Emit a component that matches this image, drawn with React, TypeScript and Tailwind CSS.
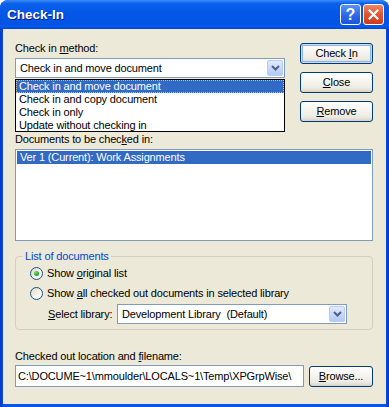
import React from "react";

function U({ children }: { children: React.ReactNode }) {
  return <span className="underline underline-offset-[1px] decoration-1">{children}</span>;
}

function Chevron() {
  return (
    <svg width="9" height="6" viewBox="0 0 9 6">
      <path d="M1 1 L4.5 4.5 L8 1" fill="none" stroke="#4D6185" strokeWidth="2" />
    </svg>
  );
}

function Combo({ text, width }: { text: string; width: string }) {
  return (
    <div className={`${width} h-[20px] border border-[#7F9DB9] bg-white flex items-center`}>
      <span className="pl-[4px] flex-1 whitespace-pre overflow-hidden">{text}</span>
      <div className="w-[16px] h-[16px] mr-[1px] rounded-[2px] border border-[#B9CCF7] bg-[linear-gradient(180deg,#E1EAFE_0%,#C9D9FC_50%,#B4C8F6_100%)] flex items-center justify-center">
        <Chevron />
      </div>
    </div>
  );
}

function XPButton({ children, isDefault, width }: { children: React.ReactNode; isDefault?: boolean; width: string }) {
  return (
    <div
      className={`${width} h-[21px] rounded-[3px] border border-[#003C74] bg-[linear-gradient(180deg,#FFFFFF_0%,#F6F5F0_40%,#ECEAE2_80%,#D8D2C6_100%)] flex items-center justify-center ${
        isDefault ? "shadow-[inset_0_0_0_1px_#C7DAF8,inset_0_0_0_2px_#8DB2EC]" : ""
      }`}
    >
      <span className="whitespace-pre">{children}</span>
    </div>
  );
}

function Radio({ checked }: { checked?: boolean }) {
  return (
    <div className="w-[13px] h-[13px] rounded-full border border-[#1C5180] bg-[linear-gradient(135deg,#DCD8CB_0%,#F6F5F1_60%,#FFFFFF_100%)] flex items-center justify-center shrink-0">
      {checked && (
        <div className="w-[5px] h-[5px] rounded-full bg-[radial-gradient(circle_at_35%_35%,#6BE368_0%,#2DAA2A_60%,#1A8A18_100%)]" />
      )}
    </div>
  );
}

export default function App() {
  return (
    <div className="w-[389px] h-[407px] bg-white font-['Liberation_Sans',Arial,sans-serif]">
      <div className="w-[389px] h-[407px] flex flex-col rounded-t-[8px] overflow-hidden bg-[linear-gradient(90deg,#0733C9_0%,#0A55E4_1%,#0A55E4_99%,#0733C9_100%)]">
        {/* Title bar */}
        <div className="h-[29px] shrink-0 flex items-center pl-[7px] pr-[5px] bg-[linear-gradient(180deg,#3D8DF9_0%,#0A62EC_12%,#0356E6_45%,#0254E4_80%,#0459EC_92%,#0443CC_100%)]">
          <span className="text-white font-bold text-[13.5px] leading-[15px] [text-shadow:1px_1px_0_#0A1883]">
            Check-In
          </span>
          <div className="ml-auto flex gap-[2px]">
            <div className="w-[21px] h-[21px] rounded-[3px] border border-white bg-[linear-gradient(180deg,#5A94F8_0%,#2B67E6_55%,#1E55D6_100%)] flex items-center justify-center">
              <span className="text-white font-bold text-[16px] leading-[16px]">?</span>
            </div>
            <div className="w-[21px] h-[21px] rounded-[3px] border border-white bg-[linear-gradient(180deg,#EE8762_0%,#E0552F_50%,#CC3C1A_100%)] flex items-center justify-center">
              <svg width="11" height="11" viewBox="0 0 11 11">
                <path d="M1.5 1.5 L9.5 9.5 M9.5 1.5 L1.5 9.5" stroke="white" strokeWidth="2.2" strokeLinecap="square" />
              </svg>
            </div>
          </div>
        </div>

        {/* Body */}
        <div className="flex-1 mx-[3px] mb-[3px] bg-[#ECE9D8] relative pl-[12px] pr-[13px] pt-[13px] flex flex-col text-[11px] leading-[13px] tracking-[-0.15px] text-black">
          <div className="flex">
            <div className="w-[270px] flex flex-col">
              <div>
                Check in <U>m</U>ethod:
              </div>
              <div className="mt-[3px]">
                <Combo text="Check in and move document" width="w-[270px]" />
              </div>
            </div>
            <div className="ml-auto flex flex-col gap-[8px] pt-[1px]">
              <XPButton isDefault width="w-[73px]">
                Check <U>I</U>n
              </XPButton>
              <XPButton width="w-[73px]">
                <U>C</U>lose
              </XPButton>
              <XPButton width="w-[73px]">
                <U>R</U>emove
              </XPButton>
            </div>
          </div>

          <div className="mt-[11px]">
            Documents to be chec<U>k</U>ed in:
          </div>
          <div className="mt-[3px] h-[92px] border border-[#7F9DB9] bg-white p-[1px]">
            <div className="h-[13px] bg-[#316AC5] text-white pl-[3px] whitespace-nowrap">
              Ver 1 (Current): Work Assignments
            </div>
          </div>

          <fieldset className="mt-[9px] border border-[#D0D0BF] rounded-[4px] pl-[14px] pr-[25px] pt-[4px] pb-[5px]">
            <legend className="ml-[-7px] px-[2px] text-[#0046D5] leading-[13px]">List of documents</legend>
            <div className="flex items-center gap-[4px] h-[13px]">
              <Radio checked />
              <span>
                Show <U>o</U>riginal list
              </span>
            </div>
            <div className="flex items-center gap-[4px] h-[13px] mt-[7px]">
              <Radio />
              <span>
                Show <U>a</U>ll checked out documents in selected library
              </span>
            </div>
            <div className="flex items-center mt-[4px] pl-[18px]">
              <span className="w-[69px]">
                <U>S</U>elect library:
              </span>
              <Combo text="Development Library  (Default)" width="w-[230px]" />
            </div>
          </fieldset>

          <div className="mt-[20px]">
            Checked out location and <U>f</U>ilename:
          </div>
          <div className="flex items-start mt-[2px]">
            <div className="w-[289px] h-[22px] border border-[#7F9DB9] bg-white flex items-center pl-[2px] overflow-hidden whitespace-nowrap">
              C:\DOCUME~1\mmoulder\LOCALS~1\Temp\XPGrpWise\
            </div>
            <div className="ml-[5px] mt-[1px]">
              <XPButton width="w-[64px]">
                <U>B</U>rowse...
              </XPButton>
            </div>
          </div>

          {/* Open dropdown list */}
          <div className="absolute left-[12px] top-[50px] w-[270px] h-[53px] border border-black bg-white">
            <div className="h-[13px] bg-[#316AC5] text-white pl-[2px] border border-dotted border-[#E9B66B] leading-[11px] whitespace-nowrap">
              Check in and move document
            </div>
            <div className="h-[13px] pl-[3px] whitespace-nowrap">Check in and copy document</div>
            <div className="h-[13px] pl-[3px] whitespace-nowrap">Check in only</div>
            <div className="h-[12px] pl-[3px] whitespace-nowrap">Update without checking in</div>
          </div>
        </div>
      </div>
    </div>
  );
}
